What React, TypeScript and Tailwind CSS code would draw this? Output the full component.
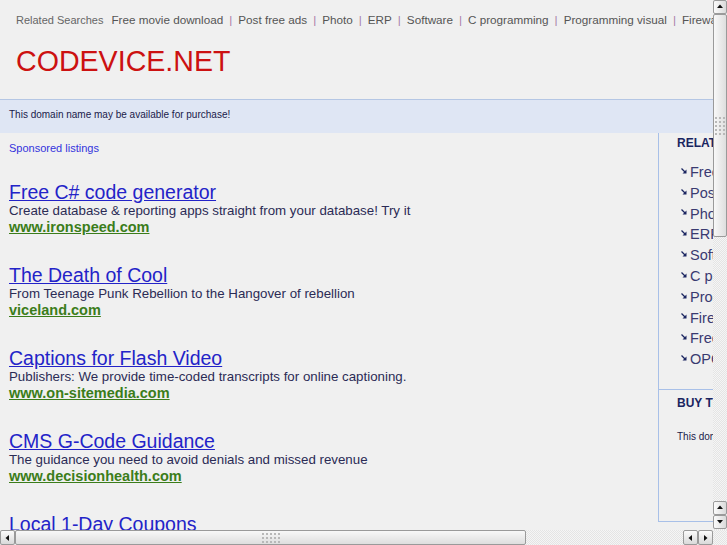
import React from "react";

const F = { fontFamily: '"Liberation Sans", Arial, sans-serif' };

function Tri({ dir }: { dir: "up" | "down" | "left" | "right" }) {
  const pts: Record<string, string> = {
    up: "1,5 4,1.5 7,5",
    down: "1,2 4,5.5 7,2",
    left: "5,1 1.5,4 5,7",
    right: "2,1 5.5,4 2,7",
  };
  return (
    <svg width="8" height="8" viewBox="0 0 8 8">
      <polygon points={pts[dir]} fill="#111" />
    </svg>
  );
}

function Btn({ dir, v }: { dir: "up" | "down" | "left" | "right"; v?: boolean }) {
  return (
    <div
      className={
        "flex items-center justify-center border border-[#9a9a9a] rounded-[2px] " +
        (v
          ? "w-[14px] h-[14px] bg-gradient-to-r from-[#fbfbfb] to-[#dadada]"
          : "w-[15px] h-[15px] bg-gradient-to-b from-[#fbfbfb] to-[#dadada]")
      }
    >
      <Tri dir={dir} />
    </div>
  );
}

function Grip({ vertical }: { vertical: boolean }) {
  const rows = vertical ? 5 : 3;
  const cols = vertical ? 3 : 5;
  return (
    <div
      className="grid gap-[2px]"
      style={{ gridTemplateColumns: `repeat(${cols}, 2px)`, gridTemplateRows: `repeat(${rows}, 2px)` }}
    >
      {Array.from({ length: rows * cols }).map((_, i) => (
        <div key={i} className="w-[2px] h-[2px] bg-[#b8b8b8]" />
      ))}
    </div>
  );
}

const trough =
  "bg-[#ebebeb] bg-[image:repeating-conic-gradient(#f5f5f5_0_25%,#e4e4e4_0_50%)] bg-[length:2px_2px]";

const ads = [
  {
    t: "Free C# code generator",
    d: "Create database & reporting apps straight from your database! Try it",
    u: "www.ironspeed.com",
  },
  {
    t: "The Death of Cool",
    d: "From Teenage Punk Rebellion to the Hangover of rebellion",
    u: "viceland.com",
  },
  {
    t: "Captions for Flash Video",
    d: "Publishers: We provide time-coded transcripts for online captioning.",
    u: "www.on-sitemedia.com",
  },
  {
    t: "CMS G-Code Guidance",
    d: "The guidance you need to avoid denials and missed revenue",
    u: "www.decisionhealth.com",
  },
  {
    t: "Local 1-Day Coupons",
    d: "Get up to 90% off the best local deals every day in your city.",
    u: "www.groupon.com",
  },
];

const related = [
  "Free movie download",
  "Post free ads",
  "Photo",
  "ERP",
  "Software",
  "C programming",
  "Programming visual",
  "Firewall",
  "Free software",
];

const side = [
  "Free movie download",
  "Post free ads",
  "Photo",
  "ERP",
  "Software",
  "C programming",
  "Programming visual",
  "Firewall",
  "Free software",
  "OPC server",
];

function Arrow() {
  return (
    <svg width="6" height="6" viewBox="0 0 6 6" className="ml-[1px] mr-[3px] mb-[4px] shrink-0">
      <path d="M0.5 0.5 L4.5 4.5" stroke="#1a2560" strokeWidth="1.2" />
      <polygon points="5.5,1.5 5.5,5.5 1.5,5.5" fill="#1a2560" />
    </svg>
  );
}

export default function App() {
  return (
    <div className="w-[727px] h-[545px] overflow-hidden flex flex-col bg-[#f0f0f0]" style={F}>
      <div className="flex flex-1 min-h-0">
        <div className="flex-1 overflow-hidden">
          <div className="w-[925px]">
            {/* header */}
            <div className="h-[100px] border-b border-[#b4c6e4] pl-[16px] pt-[13px]">
              <div className="flex items-center h-[14px] whitespace-nowrap">
                <span className="text-[11px] text-[#666] mr-[8px]">Related Searches</span>
                {related.map((r, i) => (
                  <span key={r} className="flex items-center text-[11.7px] text-[#555]">
                    {i > 0 && <span className="text-[#a87ca8] mx-[6px]">|</span>}
                    {r}
                  </span>
                ))}
              </div>
              <div className="mt-[18px] text-[28.6px] leading-[32px] text-[#cc1111]">CODEVICE.NET</div>
            </div>
            {/* band */}
            <div className="h-[33px] bg-[#dfe6f4] pl-[9px] pt-[9px]">
              <div className="text-[10px] leading-[12px] text-[#1a1a4a]">
                This domain name may be available for purchase!
              </div>
            </div>
            {/* body */}
            <div className="flex">
              <div className="w-[658px] pl-[9px] pt-[8px]">
                <div className="text-[11px] leading-[14px] text-[#3333dd]">Sponsored listings</div>
                <div className="mt-[27px]">
                  {ads.map((a) => (
                    <div key={a.t} className="mb-[29px] whitespace-nowrap">
                      <div className="text-[19.5px] leading-[20px] text-[#2323c8] underline">{a.t}</div>
                      <div className="text-[13.3px] leading-[17px] text-[#2b2b55]">{a.d}</div>
                      <div className="text-[14.5px] leading-[17px] font-bold text-[#3b7d1a] underline">{a.u}</div>
                    </div>
                  ))}
                </div>
              </div>
              <div className="w-[260px] h-[389px] border-l border-b border-[#a8c0e8] flex flex-col">
                <div className="h-[257px] border-b border-[#a8c0e8] pl-[18px] pt-[3px]">
                  <div className="text-[12px] leading-[14px] font-bold text-[#1a2560]">RELATED SEARCHES</div>
                  <div className="mt-[12.4px] pl-[3px]">
                    {side.map((s) => (
                      <div key={s} className="flex items-center h-[20.8px] text-[14.5px] text-[#3a3a70] whitespace-nowrap">
                        <Arrow />
                        {s}
                      </div>
                    ))}
                  </div>
                </div>
                <div className="pl-[18px] pt-[6px]">
                  <div className="text-[12px] leading-[14px] font-bold text-[#1a2560]">BUY THIS DOMAIN</div>
                  <div className="mt-[21px] text-[10px] leading-[12px] text-[#1a1a4a] whitespace-nowrap">
                    This domain may be for sale.
                  </div>
                </div>
              </div>
            </div>
          </div>
        </div>
        {/* vertical scrollbar */}
        <div className={"w-[14px] flex flex-col " + trough}>
          <Btn dir="up" v />
          <div className="h-[223px] border border-[#9a9a9a] rounded-[2px] bg-gradient-to-r from-[#f8f8f8] to-[#dedede] flex items-center justify-center">
            <Grip vertical />
          </div>
          <div className="flex-1" />
          <Btn dir="up" v />
          <Btn dir="down" v />
          <div className="h-[1px]" />
        </div>
      </div>
      {/* horizontal scrollbar */}
      <div className={"h-[15px] flex " + trough}>
        <Btn dir="left" />
        <div className="w-[511px] border border-[#9a9a9a] rounded-[2px] bg-gradient-to-b from-[#f8f8f8] to-[#dedede] flex items-center justify-center">
          <Grip vertical={false} />
        </div>
        <div className="flex-1" />
        <Btn dir="left" />
        <Btn dir="right" />
        <div className="w-[14px]" />
      </div>
    </div>
  );
}
